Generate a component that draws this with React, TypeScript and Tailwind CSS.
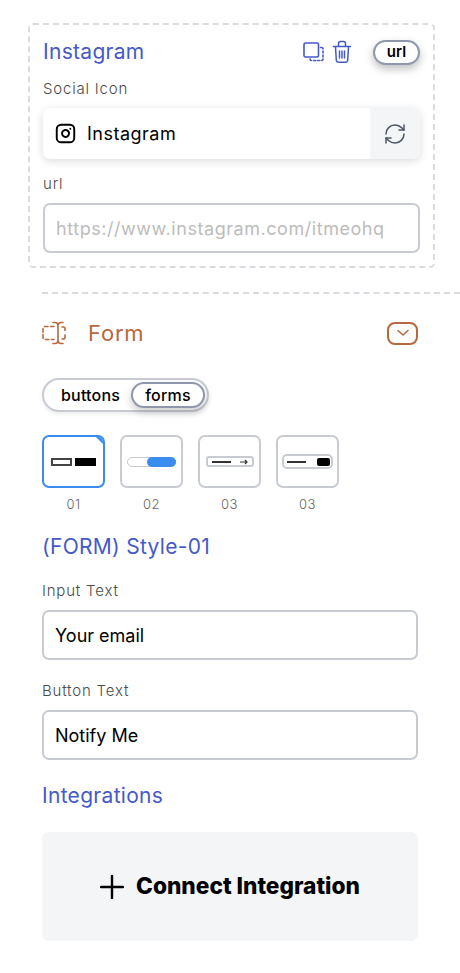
import React from 'react';
import { Instagram, RefreshCw } from 'lucide-react';

const FONT = "font-['Inter',sans-serif]";

const Label = ({ children }: { children: React.ReactNode }) => (
  <div className="text-[15px] leading-[20px] font-light tracking-[0.8px] text-[#4a4a4a]">{children}</div>
);

const Heading = ({ children }: { children: React.ReactNode }) => (
  <h3 className="text-[21px] leading-[28px] font-normal tracking-[0.3px] text-[#4559c9]">{children}</h3>
);

const TextField = ({ value, muted }: { value: string; muted?: boolean }) => (
  <div
    className={`flex h-[50px] items-center rounded-[7px] border-2 border-[#c8ccd2] bg-white px-[11px] text-[18px] ${
      muted ? 'text-[#bcbcbc] tracking-[0.55px]' : 'text-black'
    }`}
  >
    {value}
  </div>
);

const Thumb = ({ label, active, children }: { label: string; active?: boolean; children: React.ReactNode }) => (
  <div className="flex w-[63px] flex-col items-center">
    <div
      className={`relative flex h-[53px] w-[63px] items-center justify-center overflow-hidden rounded-[7px] border-2 bg-white ${
        active ? 'border-[#3a8dee]' : 'border-[#c8ccd2]'
      }`}
    >
      {active && <div className="absolute -right-[5px] -top-[5px] h-[10px] w-[10px] rotate-45 bg-[#3a8dee]" />}
      {children}
    </div>
    <div className="mt-[8px] text-[13px] leading-[16px] font-light tracking-[0.5px] text-[#666]">{label}</div>
  </div>
);

export default function App() {
  return (
    <div className={`${FONT} h-[973px] w-[460px] overflow-hidden bg-white`}>
      <div className="pl-[28px] pr-[25px] pt-[23px]">
        <section className="h-[245px] rounded-[5px] border-2 border-dashed border-[#d8dbdf] px-[13px] pt-[12px]">
          <div className="flex h-[30px] items-center">
            <Heading>Instagram</Heading>
            <div className="ml-auto flex items-center">
              <svg width="21" height="20" viewBox="0 0 21 20" fill="none" stroke="#4559c9" strokeWidth="1.6" strokeLinejoin="round">
                <rect x="1" y="1" width="14.5" height="14" rx="1.5" />
                <path d="M17.5 5.5h1a1.5 1.5 0 0 1 1.5 1.5M20 9v2M20 13v2M20 17a1.5 1.5 0 0 1-1.5 1.5M16.5 18.5h-2M12.5 18.5h-2M8.5 18.5A1.5 1.5 0 0 1 7 17" strokeLinecap="round" />
              </svg>
              <svg className="ml-[8px]" width="20" height="24" viewBox="0 0 20 24" fill="none" stroke="#4559c9" strokeWidth="1.5" strokeLinecap="round" strokeLinejoin="round">
                <path d="M1.5 6.5h17M6.5 6V3.5a2 2 0 0 1 2-2h3a2 2 0 0 1 2 2V6M3.5 7l.8 13a2.5 2.5 0 0 0 2.5 2.3h6.4a2.5 2.5 0 0 0 2.5-2.3l.8-13M7.5 11v7M10 11v7M12.5 11v7" />
              </svg>
              <div className="ml-[21px] flex h-[25px] w-[47px] items-center justify-center rounded-full border-2 border-[#8f97ad] bg-white text-[15px] font-semibold text-black shadow-[0_4px_8px_rgba(0,0,0,0.25)]">
                url
              </div>
            </div>
          </div>

          <div className="mt-[12px]">
            <Label>Social Icon</Label>
          </div>
          <div className="mt-[9px] flex h-[51px] overflow-hidden rounded-[7px] bg-white shadow-[0_2px_8px_rgba(0,0,0,0.14)]">
            <div className="flex flex-1 items-center pl-[12px] text-[18px] tracking-[0.5px] text-black">
              <Instagram size={21} strokeWidth={2.2} />
              <span className="ml-[11px]">Instagram</span>
            </div>
            <div className="flex w-[50px] items-center justify-center bg-[#f4f5f7]">
              <RefreshCw size={24} strokeWidth={1.5} className="text-[#4b5563]" />
            </div>
          </div>

          <div className="mt-[15px]">
            <Label>url</Label>
          </div>
          <div className="mt-[9px]">
            <TextField value="https://www.instagram.com/itmeohq" muted />
          </div>
        </section>
      </div>

      <div className="ml-[42px] mt-[24px] border-t-2 border-dashed border-[#d8dbdf]" />

      <div className="pl-[42px] pr-[42px]">
        <div className="mt-[23px] flex h-[32px] items-center">
          <svg width="24" height="24" viewBox="0 0 24 24" fill="none" stroke="#b8673f" strokeWidth="1.6" strokeLinecap="round">
            <path d="M11 1.5h2a3 3 0 0 1 3 3v15a3 3 0 0 1-3 3h-2M21 1.5h-2a3 3 0 0 0-3 3v15a3 3 0 0 0 3 3h2" />
            <path d="M12 5.5H3a2 2 0 0 0-2 2v9a2 2 0 0 0 2 2h9" strokeDasharray="3.5 2.5" />
            <path d="M20 6h1.5a1.5 1.5 0 0 1 1.5 1.5v2M23 14v2.5a1.5 1.5 0 0 1-1.5 1.5H20" />
          </svg>
          <span className="ml-[22px] text-[22px] tracking-[0.8px] text-[#b8673f]">Form</span>
          <div className="ml-auto flex h-[23px] w-[31px] items-center justify-center rounded-[8px] border-2 border-[#b8673f]">
            <svg width="14" height="8" viewBox="0 0 14 8" fill="none" stroke="#b8673f" strokeWidth="1.6" strokeLinecap="round" strokeLinejoin="round">
              <path d="M2 1.5l5 4.5 5-4.5" />
            </svg>
          </div>
        </div>

        <div className="mt-[29px] flex h-[34px] w-[167px] items-center rounded-full border-2 border-[#c8ccd2] bg-white pl-[17px] pr-[2px] text-[16px] font-medium tracking-[0.2px] text-black shadow-[0_2px_4px_rgba(0,0,0,0.08)]">
          <span>buttons</span>
          <div className="ml-auto flex h-[26px] w-[74px] items-center justify-center rounded-full border-2 border-[#8f97ad] bg-white shadow-[0_4px_8px_rgba(0,0,0,0.2)]">
            forms
          </div>
        </div>

        <div className="mt-[23px] flex gap-[15px]">
          <Thumb label="01" active>
            <div className="flex gap-[3px]">
              <div className="h-[8px] w-[21px] border-2 border-[#444]" />
              <div className="h-[8px] w-[21px] bg-black" />
            </div>
          </Thumb>
          <Thumb label="02">
            <div className="flex h-[10px] w-[49px] justify-end rounded-full border border-[#c5c9d0]">
              <div className="-my-px -mr-px h-[10px] w-[29px] rounded-full bg-[#3a8dee]" />
            </div>
          </Thumb>
          <Thumb label="03">
            <div className="flex h-[11px] w-[48px] items-center justify-between rounded-[3px] border-2 border-[#c8ccd2] px-[4px]">
              <div className="h-[2px] w-[19px] bg-[#333]" />
              <svg width="8" height="6" viewBox="0 0 8 6" fill="none" stroke="#333" strokeWidth="1.2">
                <path d="M0 3h7M5 1l2 2-2 2" />
              </svg>
            </div>
          </Thumb>
          <Thumb label="03">
            <div className="flex h-[15px] w-[51px] items-center justify-between rounded-[5px] border-2 border-[#c8ccd2] pl-[3px] pr-[1px]">
              <div className="h-[2px] w-[19px] bg-[#333]" />
              <div className="h-[8px] w-[13px] rounded-[2px] bg-black" />
            </div>
          </Thumb>
        </div>

        <div className="mt-[21px]">
          <Heading>(FORM) Style-01</Heading>
        </div>
        <div className="mt-[20px]">
          <Label>Input Text</Label>
        </div>
        <div className="mt-[9px]">
          <TextField value="Your email" />
        </div>
        <div className="mt-[21px]">
          <Label>Button Text</Label>
        </div>
        <div className="mt-[9px]">
          <TextField value="Notify Me" />
        </div>
        <div className="mt-[22px]">
          <Heading>Integrations</Heading>
        </div>
        <div className="mt-[22px] flex h-[109px] items-center justify-center rounded-[7px] bg-[#f4f5f7]">
          <svg width="24" height="24" viewBox="0 0 24 24" fill="none" stroke="#000" strokeWidth="2.4" strokeLinecap="round">
            <path d="M12 1v22M1 12h22" />
          </svg>
          <span className="ml-[12px] text-[22.7px] font-extrabold text-black">Connect Integration</span>
        </div>
      </div>
    </div>
  );
}
